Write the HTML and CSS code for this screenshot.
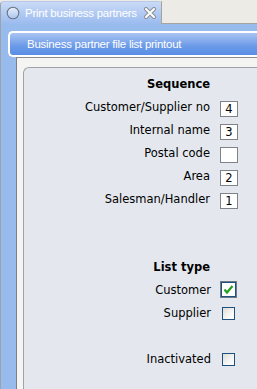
FILE: index.html
```html
<!DOCTYPE html>
<html lang="en">
<head>
    <meta charset="UTF-8">
    <title>Print business partners</title>
    <link rel="stylesheet" href="styles.css">
</head>
<body>
    <div class="tabbar">
        <div class="tab">
            <svg class="tab-icon" width="14" height="14" viewBox="0 0 14 14">
                <defs>
                    <linearGradient id="ball" x1="0" y1="0" x2="0" y2="1">
                        <stop offset="0" stop-color="#e8f0fb"/>
                        <stop offset="1" stop-color="#a9c4ee"/>
                    </linearGradient>
                </defs>
                <circle cx="7" cy="7" r="5.8" fill="url(#ball)" stroke="#6b7480" stroke-width="1.1"/>
            </svg>
            <span class="tab-title">Print business partners</span>
            <svg class="tab-close" width="12" height="12" viewBox="0 0 12 12">
                <path d="M2 2 L10 10 M10 2 L2 10" stroke="#8a8f96" stroke-width="4" stroke-linecap="round"/>
                <path d="M2 2 L10 10 M10 2 L2 10" stroke="#ffffff" stroke-width="2" stroke-linecap="round"/>
            </svg>
        </div>
        <div class="tab-rest"></div>
    </div>

    <div class="window">
        <div class="header">Business partner file list printout</div>
        <div class="body">
            <div class="panel">
                <div class="row heading">Sequence</div>
                <div class="row"><span>Customer/Supplier no</span><span class="num">4</span></div>
                <div class="row"><span>Internal name</span><span class="num">3</span></div>
                <div class="row"><span>Postal code</span><span class="num"></span></div>
                <div class="row"><span>Area</span><span class="num">2</span></div>
                <div class="row"><span>Salesman/Handler</span><span class="num">1</span></div>

                <div class="row heading spaced">List type</div>
                <div class="row">
                    <span>Customer</span>
                    <span class="check focused">
                        <svg width="11" height="11" viewBox="0 0 11 11">
                            <path d="M1.5 5.5 L4 8.5 L9.5 2" fill="none" stroke="#21a021" stroke-width="2.2"/>
                        </svg>
                    </span>
                </div>
                <div class="row"><span>Supplier</span><span class="check"></span></div>
                <div class="row gap"><span>Inactivated</span><span class="check"></span></div>
            </div>
        </div>
    </div>
</body>
</html>
```

FILE: styles.css
```css
body {
    margin: 0;
    font-family: "DejaVu Sans", Verdana, sans-serif;
    font-size: 11.5px;
    color: #000;
    background-color: #ecebe6;
    overflow: hidden;
}
.tabbar {
    display: flex;
    height: 24px;
    padding-top: 1px;
    box-sizing: border-box;
}
.tab {
    width: 161px;
    display: flex;
    align-items: center;
    gap: 5px;
    padding-left: 5px;
    box-sizing: border-box;
    background: linear-gradient(#c9daf6, #9bbbef);
    border-left: 1px solid #9da3aa;
    border-top: 1px solid #b8c8e6;
    border-radius: 4px 3px 0 0;
    color: #fff;
    font-family: "Liberation Sans", Arial, sans-serif;
    font-size: 11.5px;
    letter-spacing: -0.25px;
}
.tab-icon,
.tab-close {
    flex-shrink: 0;
}
.tab-title {
    flex: 1;
    white-space: nowrap;
}
.tab-close {
    margin-right: 5px;
}
.tab-rest {
    flex: 1;
    border-left: 1px solid #a7a59b;
    border-bottom: 1px solid #a7a59b;
    background-color: #ecebe6;
}
.window {
    height: 365px;
    background-color: #98bbee;
    border-left: 1px solid #9da3aa;
    padding-top: 7px;
    box-sizing: border-box;
}
.header {
    height: 26px;
    margin-left: 7px;
    padding-left: 17px;
    display: flex;
    align-items: center;
    box-sizing: border-box;
    border: 2px solid #fff;
    border-right: none;
    border-radius: 5px 0 0 5px;
    background: linear-gradient(#a9c4f2, #6b9ae8 60%, #5a8ee6);
    color: #fff;
    font-family: "Liberation Sans", Arial, sans-serif;
    font-size: 11.5px;
    letter-spacing: -0.25px;
}
.body {
    margin-left: 15px;
    height: 332px;
    padding: 9px 0 0 6px;
    box-sizing: border-box;
    background-color: #f4f4f3;
    border-left: 1px solid #7c7f84;
    border-top: 1px solid #8a8c90;
}
.panel {
    height: 100%;
    padding: 4px 19px 0 0;
    box-sizing: border-box;
    background-color: #e4e8ee;
    border-left: 1px solid #9fa2a6;
    border-top: 1px solid #9fa2a6;
    border-radius: 6px 0 0 0;
}
.row {
    height: 23px;
    display: flex;
    align-items: center;
    justify-content: flex-end;
    gap: 10px;
}
.heading {
    font-weight: bold;
    padding-right: 28px;
}
.spaced {
    margin-top: 45px;
}
.gap {
    margin-top: 23px;
}
.num {
    width: 18px;
    height: 16px;
    margin-top: 4px;
    box-sizing: border-box;
    border: 1px solid #7f8388;
    background-color: #fff;
    display: flex;
    align-items: center;
    justify-content: center;
}
.check {
    width: 13px;
    height: 13px;
    margin: 2px 3px 0 1px;
    box-sizing: border-box;
    border: 1px solid #1c5180;
    background: linear-gradient(135deg, #dcdcd6, #f6f6f4 60%, #ffffff);
    display: flex;
    align-items: center;
    justify-content: center;
}
.check.focused {
    width: 15px;
    height: 15px;
    margin: 0 2px 0 0;
    background: #fff;
    box-shadow: 0 0 0 1px #6f7a86;
}
```
